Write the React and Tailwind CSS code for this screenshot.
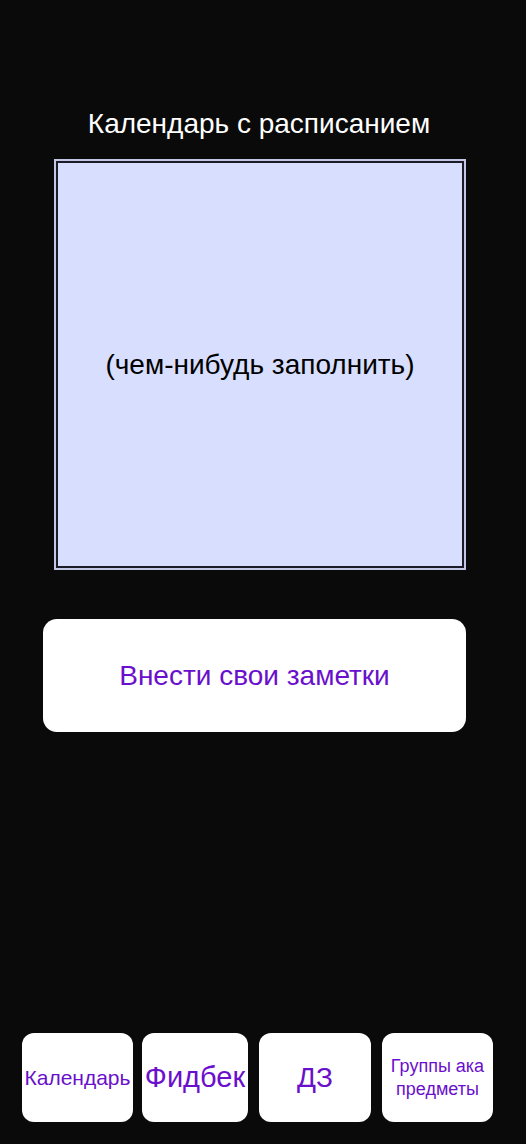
export default function App() {
  const font = { fontFamily: '"Liberation Sans", Arial, sans-serif' }
  return (
    <div className="min-h-[1144px] w-[526px] bg-[#0a0a0a] flex flex-col" style={font}>
      <h1 className="mt-[104px] w-[518px] text-[28px] leading-[40px] text-white text-center">
        Календарь с расписанием
      </h1>

      <div className="mt-[15px] ml-[54px] w-[412px] h-[411px] border-2 border-[#c3c6e4]">
        <div className="w-full h-full border-2 border-[#1c1c28] bg-[#d8defd] flex items-center justify-center">
          <span className="text-[28px] text-black">(чем-нибудь заполнить)</span>
        </div>
      </div>

      <button
        type="button"
        className="mt-[49px] ml-[43px] w-[423px] h-[113px] rounded-[14px] bg-white text-[#6a0fcc] text-[28px] flex items-center justify-center"
      >
        Внести свои заметки
      </button>

      <div className="mt-[301px] ml-[22px] flex">
        <NavButton className="w-[111px] text-[21px]">Календарь</NavButton>
        <NavButton className="ml-[9px] w-[106px] text-[29px]">Фидбек</NavButton>
        <NavButton className="ml-[11px] w-[112px] text-[28px]">ДЗ</NavButton>
        <NavButton className="ml-[11px] w-[111px] text-[18px] leading-[23px]">
          Группы ака
          <br />
          предметы
        </NavButton>
      </div>
    </div>
  )
}

function NavButton({ className, children }) {
  return (
    <button
      type="button"
      className={`h-[89px] rounded-[12px] bg-white text-[#6a0fcc] flex items-center justify-center text-center whitespace-nowrap ${className}`}
    >
      <span>{children}</span>
    </button>
  )
}
